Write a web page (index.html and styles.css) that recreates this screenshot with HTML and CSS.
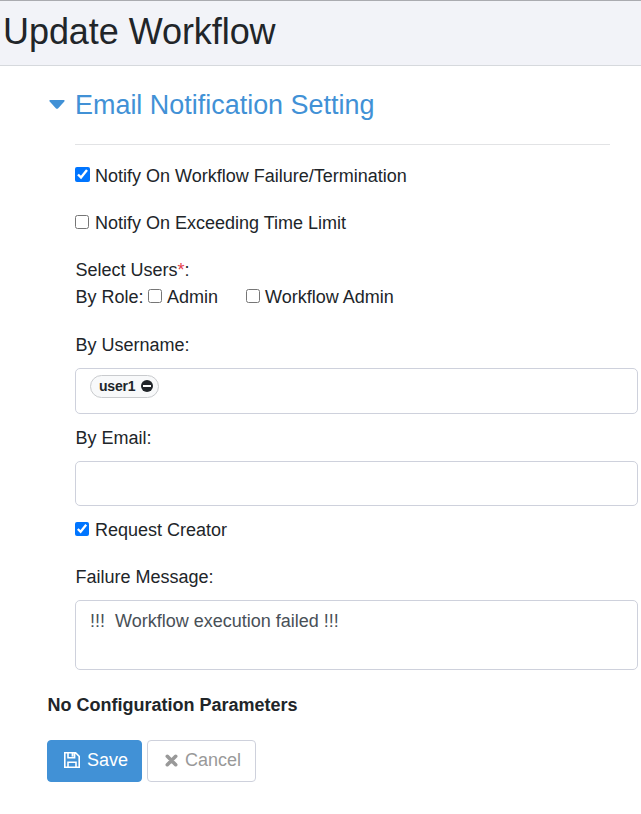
FILE: index.html
```html
<!DOCTYPE html>
<html lang="en">
<head>
    <meta charset="UTF-8">
    <meta name="viewport" content="width=device-width, initial-scale=1.0">
    <title>Update Workflow</title>
    <link rel="stylesheet" href="styles.css">
</head>
<body>
    <header class="page-header">
        <h1>Update Workflow</h1>
    </header>

    <form class="workflow-form">
        <section class="notification">
            <h2>
                <svg class="caret" width="16" height="10" viewBox="0 0 16 10"><path d="M1.2 0h13.6q1.4.3.5 1.4L9 8.4q-1 .9-2 0L.7 1.4Q-.2.3 1.2 0z"/></svg>
                <span>Email Notification Setting</span>
            </h2>

            <div class="fields">
                <label class="check"><input type="checkbox" class="large" checked><span>Notify On Workflow Failure/Termination</span></label>
                <label class="check"><input type="checkbox"><span>Notify On Exceeding Time Limit</span></label>

                <div class="users">
                    <div class="text">Select Users<span class="required">*</span>:</div>
                    <div class="roles">
                        <span class="text">By Role:</span>
                        <label class="role"><input type="checkbox"><span>Admin</span></label>
                        <label class="role"><input type="checkbox"><span>Workflow Admin</span></label>
                    </div>
                </div>

                <div class="label">By Username:</div>
                <div class="input username">
                    <span class="tag">user1
                        <svg width="12" height="12" viewBox="0 0 12 12"><circle cx="6" cy="6" r="6"/><rect x="2" y="5" width="8" height="2" fill="#fff"/></svg>
                    </span>
                </div>

                <div class="label">By Email:</div>
                <div class="input email"></div>

                <label class="check"><input type="checkbox" checked><span>Request Creator</span></label>

                <div class="label">Failure Message:</div>
                <div class="input message">!!!&nbsp; Workflow execution failed !!!</div>
            </div>
        </section>

        <div class="no-params">No Configuration Parameters</div>

        <div class="buttons">
            <button type="button" class="save">
                <svg width="16" height="16" viewBox="0 0 16 16" fill="none" stroke="#fff" stroke-width="1.6"><path d="M.8.8h10.8l3.6 3.6v10.8H.8zM4 .8v4.9h6.6V.8M4 15.2v-5h8v5.0"/><path d="M8.6 1v3.6" stroke-width="2"/></svg>
                <span>Save</span>
            </button>
            <button type="button" class="cancel">
                <svg width="13" height="13" viewBox="0 0 13 13" stroke="#999" stroke-width="3.6" stroke-linecap="round"><path d="M2.3 2.3l8.4 8.4M10.7 2.3l-8.4 8.4"/></svg>
                <span>Cancel</span>
            </button>
        </div>
    </form>
</body>
</html>
```

FILE: styles.css
```css
* {
    box-sizing: border-box;
}
body {
    margin: 0;
    background-color: #fff;
    color: #212529;
    font-family: "Liberation Sans", Arial, sans-serif;
    font-size: 18px;
    line-height: 27px;
}
.page-header {
    height: 66px;
    padding: 9px 0 0 3px;
    background-color: #f2f3f8;
    border-top: 1px solid #aaabb0;
    border-bottom: 1px solid #d6d9dd;
}
h1 {
    margin: 0;
    font-size: 36px;
    font-weight: normal;
    letter-spacing: -0.06px;
    line-height: 43px;
}
h2 {
    display: flex;
    align-items: center;
    gap: 10px;
    margin: 0;
    color: #4191d6;
    font-size: 26.95px;
    font-weight: normal;
    line-height: 32px;
}
.caret {
    fill: #4191d6;
}
.workflow-form {
    padding: 23px 3px 0 47px;
}
.notification h2 {
    padding-left: 2px;
}
.fields {
    margin-left: 28px;
}
.fields::before {
    content: "";
    display: block;
    width: 535px;
    margin: 23px 0 18px;
    border-top: 1px solid #e2e3e5;
}
.check {
    display: flex;
    align-items: center;
    gap: 6px;
    margin-bottom: 20px;
}
input[type="checkbox"] {
    width: 14px;
    height: 14px;
    margin: 0 0 4px;
}
input.large {
    width: 15px;
    height: 15px;
    margin-right: -1px;
}
.text, .label {
    padding-left: 0.5px;
}
.required {
    color: #e53e4d;
}
.users {
    margin-bottom: 21px;
}
.roles {
    display: flex;
    gap: 28px;
}
.roles > .text {
    margin-right: -23.5px;
}
.role {
    display: flex;
    align-items: center;
    gap: 5px;
}
.label {
    margin-bottom: 9px;
}
.input {
    margin-bottom: 11px;
    padding: 6px 14px;
    border: 1px solid #ced1dc;
    border-radius: 5px;
}
.username {
    display: flex;
    align-items: flex-start;
    height: 46px;
}
.email {
    height: 45px;
}
.message {
    height: 70px;
    padding-top: 7px;
    color: #495057;
}
.tag {
    display: flex;
    align-items: center;
    gap: 6px;
    height: 23px;
    padding: 0 5px 0 8px;
    border: 1px solid #c9cbce;
    border-radius: 12px;
    background-color: #f8f9fa;
    font-size: 14px;
    font-weight: bold;
    letter-spacing: -0.2px;
}
.tag svg {
    margin-bottom: 1px;
    fill: #212529;
}
.no-params {
    margin-top: 22px;
    padding-left: 0.5px;
    font-weight: bold;
}
.buttons {
    display: flex;
    gap: 5px;
    margin-top: 21px;
}
button {
    display: flex;
    align-items: center;
    justify-content: center;
    gap: 7px;
    height: 42px;
    padding: 0 0 2px 3px;
    border: 1px solid #4191d6;
    border-radius: 4px;
    font-family: inherit;
    font-size: 18px;
}
.save {
    width: 95px;
    background-color: #4191d6;
    color: #fff;
}
.cancel {
    width: 109px;
    border-color: #ced1dc;
    background-color: #fff;
    color: #999;
}
```
